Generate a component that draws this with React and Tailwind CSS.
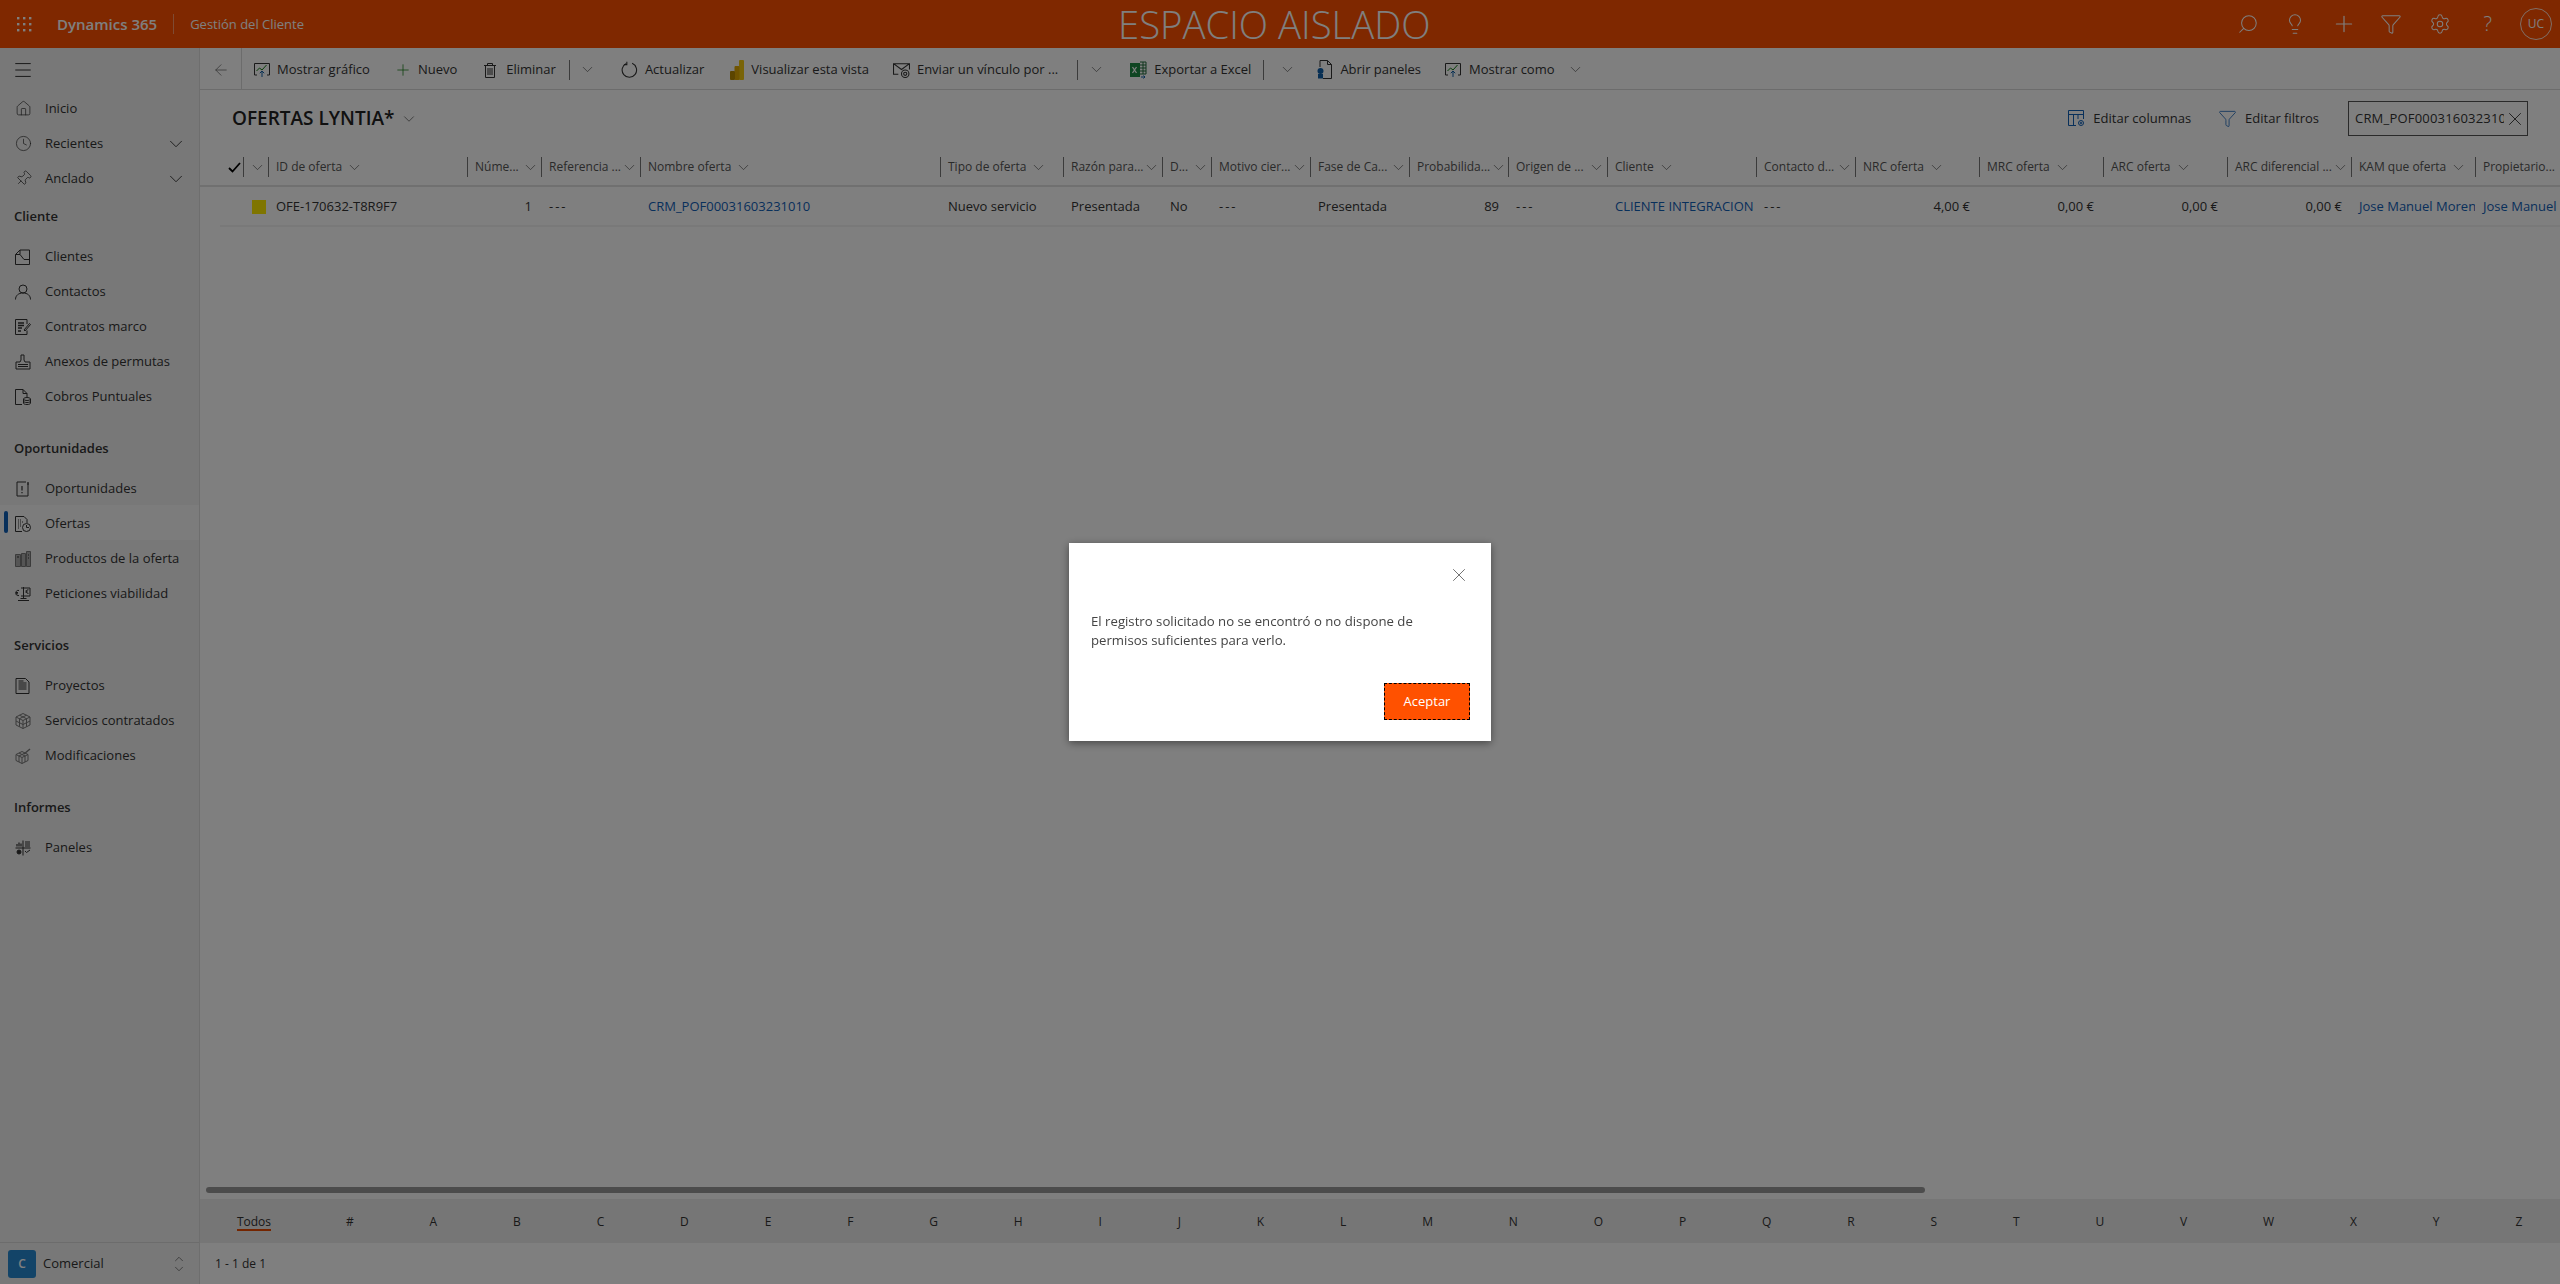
import React from 'react';
import { ChevronDown, ChevronUp, X, Menu, Search, Lightbulb, Plus, Filter, Settings, Home, Clock, Pin, ArrowLeft } from 'lucide-react';

const Ico = ({ size = 16, className = '', children }) => (
  <svg width={size} height={size} viewBox="0 0 16 16" fill="none" stroke="currentColor" strokeWidth="1" className={`shrink-0 ${className}`}>
    {children}
  </svg>
);

const ChartIcon = () => (
  <Ico className="text-[#333]">
    <path d="M3 13H.5V1.5h15V13H13" />
    <path d="M2.5 9l3-3 2.5 2 4.5-5" stroke="#107c10" />
    <path d="M8 15V9M5.8 11.2L8 9l2.2 2.2" stroke="#0f5ea8" />
  </Ico>
);

const TrashIcon = () => (
  <Ico className="text-[#333]">
    <path d="M2 3.5h12M5.5 3.5V1.5h5v2M3.5 3.5v12h9v-12M6 6v7M8 6v7M10 6v7" />
  </Ico>
);

const RefreshIcon = () => (
  <Ico size={17} className="text-[#333]">
    <path d="M10.5 2.2A6.8 6.8 0 1 1 5 2.3" />
    <path d="M5.5 .8v2.6H2.8" />
  </Ico>
);

const PowerBiIcon = () => (
  <svg width="14" height="20" viewBox="0 0 14 20" className="shrink-0">
    <rect x="9" y="0" width="5" height="20" rx="1" fill="#f2c811" />
    <rect x="4.500" y="6" width="5" height="14" rx="1" fill="#e0a800" />
    <rect x="0" y="11" width="5" height="9" rx="1" fill="#b88a00" />
  </svg>
);

const MailIcon = () => (
  <Ico size={17} className="text-[#333]">
    <path d="M5 12.500H.5v-10h15V8M.5 2.500L8 8l7.500-5.500" />
    <circle cx="11.500" cy="12" r="3.500" />
    <circle cx="11.500" cy="12" r="1.500" />
  </Ico>
);

const ExcelIcon = () => (
  <svg width="17" height="18" viewBox="0 0 17 18" className="shrink-0">
    <rect x="0" y="2" width="10" height="14" fill="#1e8a44" />
    <path d="M2.500 6l4 6M6.500 6l-4 6" stroke="#fff" strokeWidth="1.300" />
    <path d="M10 1h6v12h-6M10 4h6M10 7h6M10 10h6M13 1v12" fill="none" stroke="#1e6b3a" strokeWidth="1" />
    <path d="M11 16h4M13.500 14.500L15 16l-1.500 1.500" fill="none" stroke="#0f5ea8" strokeWidth="1" />
  </svg>
);

const PanelIcon = () => (
  <svg width="15" height="19" viewBox="0 0 15 19" fill="none" className="shrink-0">
    <path d="M3 7V.5h7.500l4 4v14H6" stroke="#333" />
    <path d="M10.500.5v4h4" stroke="#333" />
    <circle cx="3.500" cy="11" r="3" fill="#0f5ea8" />
    <rect x="1" y="14" width="5" height="4.500" fill="#0f5ea8" />
  </svg>
);

const ColumnsIcon = () => (
  <svg width="17" height="17" viewBox="0 0 17 17" fill="none" stroke="#1160b7" className="shrink-0">
    <path d="M8 15.500H.5V.5h15V9M.5 4.500h15M5.500 4.500v11M10 4.500V9" />
    <circle cx="13" cy="13" r="2.500" />
    <circle cx="13" cy="13" r=".8" />
  </svg>
);

const navIcons = {
  home: <Home size={17} strokeWidth={1} />,
  clock: <Clock size={17} strokeWidth={1} />,
  pin: <Pin size={17} strokeWidth={1} className="rotate-45" />,
  user: (
    <Ico><circle cx="8" cy="5" r="4" /><path d="M.5 15.500c0-4 3-6.500 7.500-6.500s7.500 2.500 7.500 6.500" /></Ico>
  ),
  clientes: (
    <Ico><path d="M.5 5.500V15.500h14V1H5zM.5 5.500h4.500l4 5h5.500" /><path d="M5 1v4.500" /></Ico>
  ),
  contratos: (
    <Ico><path d="M12 5V.5H.5v15H12v-4" /><path d="M3 4h6M3 6.500h6M3 9h4M3 12h3" strokeWidth="1.300" /><path d="M9 11l5.500-6.500 1 1L10 12z" /></Ico>
  ),
  anexos: (
    <Ico><path d="M6 1h3v5l1 2h5v7H1V8h4l1-2zM3 10.500h10M3 12.500h10" /></Ico>
  ),
  cobros: (
    <Ico><path d="M7 15.500H.5V.5H8l4 4V8M8 .5v4h4" /><ellipse cx="12" cy="10" rx="3.500" ry="1.500" /><path d="M8.500 10v4c0 1 1.500 1.500 3.500 1.500s3.500-.5 3.500-1.500v-4M8.500 12c0 1 1.500 1.500 3.500 1.500s3.500-.5 3.500-1.500" /></Ico>
  ),
  oportunidades: (
    <Ico><path d="M11 1H2v14h11V1.500M13 1v3" /><path d="M7 5v4.500M7 11v1.200" strokeWidth="1.200" /></Ico>
  ),
  ofertas: (
    <Ico><path d="M7 15.500H.5V.5H9l3 3V7" /><path d="M3 4h3M3 6h5M3 8h4M3 10h3M3 12h2" strokeDasharray="1 1" strokeWidth="1.200" /><circle cx="11.500" cy="11.500" r="4" /><path d="M11.500 9v2.500H14" /></Ico>
  ),
  productos: (
    <Ico className="text-[#777]"><path d="M.5 3.500h5v12h-5zM6.500 2.500h4v13h-4zM11.500.5h4v15h-4z" fill="#aaa" /><path d="M2 6h2M13 4h1M13 7h1" stroke="#333" /></Ico>
  ),
  peticiones: (
    <Ico><path d="M6 2h9v8H6M8.500 1v11M3 14.500h11M5.500 12.500h6" /><path d="M4 4.500C2 4 1 5 1 7s1 3 3 2.500M.5 6.500H3M.5 7.800H3M13.500 3.800c-1-.3-2 .2-2 1.800s1 2 2 1.800M10.500 5h2M10.500 6.200h2" /></Ico>
  ),
  proyectos: (
    <Ico><path d="M1 .5h9.500l3.500 3.500v11.500H1zM3.500 5h8M3.500 7h8M3.500 9h8M3.500 11h8M3.500 3h5" /></Ico>
  ),
  servicios: (
    <Ico className="text-[#777]"><path d="M8 .5l7 3.500v8l-7 3.500-7-3.500V4zM1 4l7 3.500L15 4M8 7.500v8M4.500 2.200l7 3.500v8M11.500 2.200l-7 3.500v8M1 8l7 3.500L15 8" /></Ico>
  ),
  modificaciones: (
    <Ico className="text-[#777]"><path d="M7 3.500l6 3v6l-6 3-6-3v-6zM1 6.500l6 3 6-3M7 9.500v6M4 5l6 3v6M10 5l-6 3v6" /><path d="M9 6l6-5" strokeWidth="1.400" /></Ico>
  ),
  paneles: (
    <Ico><path d="M.5 8h15M8 .5v15" /><path d="M2 6.500V4M4 6.500V2.500M6 6.500V3.500" strokeWidth="1.200" /><path d="M10 2h5M10 4h5M10 6h5" /><circle cx="4" cy="12" r="2" fill="currentColor" /><path d="M10 11l1.500 1.500L15 10" /></Ico>
  ),
};

const navGroups = [
  { title: 'Cliente', items: [['Clientes', 'clientes'], ['Contactos', 'user'], ['Contratos marco', 'contratos'], ['Anexos de permutas', 'anexos'], ['Cobros Puntuales', 'cobros']] },
  { title: 'Oportunidades', items: [['Oportunidades', 'oportunidades'], ['Ofertas', 'ofertas'], ['Productos de la oferta', 'productos'], ['Peticiones viabilidad', 'peticiones']] },
  { title: 'Servicios', items: [['Proyectos', 'proyectos'], ['Servicios contratados', 'servicios'], ['Modificaciones', 'modificaciones']] },
  { title: 'Informes', items: [['Paneles', 'paneles']] },
];

const NavItem = ({ label, icon, active, arrow }) => (
  <div className={`relative flex h-[35px] items-center pl-[15px] pr-[8px] pt-[2px] text-[#333] ${active ? 'bg-[#f8f8f8]' : ''}`}>
    {active && <span className="absolute left-[4px] top-[6px] h-[22px] w-[4px] rounded-sm bg-[#1160b7]" />}
    <span className="flex w-[30px] shrink-0 items-center">{navIcons[icon]}</span>
    <span className="flex-1 whitespace-nowrap">{label}</span>
    {arrow && <ChevronDown size={22} strokeWidth={1} className="mr-[4px]" />}
  </div>
);

const Sidebar = () => (
  <aside className="flex w-[200px] shrink-0 flex-col border-r border-[#dcdcdc] bg-[#f0f0f0]">
    <div className="flex h-[42px] items-center pl-[12px] pt-[2px] text-[#222]">
      <Menu size={22} strokeWidth={1} />
    </div>
    <NavItem label="Inicio" icon="home" />
    <NavItem label="Recientes" icon="clock" arrow />
    <NavItem label="Anclado" icon="pin" arrow />
    {navGroups.map((group, i) => (
      <div key={group.title} className={i > 0 ? 'mt-[14px]' : ''}>
        <div className="flex h-[43px] items-center pl-[14px] pt-[1px] font-semibold text-[#333]">{group.title}</div>
        {group.items.map(([label, icon]) => (
          <NavItem key={label} label={label} icon={icon} active={label === 'Ofertas'} />
        ))}
      </div>
    ))}
    <div className="flex-1" />
    <div className="flex h-[42px] items-center border-t border-[#d8d8d8] pl-[8px] text-[#333]">
      <span className="flex h-[28px] w-[28px] items-center justify-center rounded-[3px] bg-[#2688d0] text-[12px] font-semibold text-white">C</span>
      <span className="ml-[7px] flex-1">Comercial</span>
      <span className="mr-[13px] flex flex-col">
        <ChevronUp size={14} strokeWidth={1} className="-mb-[2px]" />
        <ChevronDown size={14} strokeWidth={1} className="-mt-[2px]" />
      </span>
    </div>
  </aside>
);

const Sep = ({ className = '' }) => <span className={`h-[20px] w-px bg-[#777] ${className}`} />;
const Chev = ({ className = '' }) => <ChevronDown size={17} strokeWidth={1} className={`shrink-0 text-[#555] ${className}`} />;

const Toolbar = () => (
  <div className="flex h-[42px] shrink-0 items-center border-b border-[#d8d8d8] pt-[2px] text-[#333]">
    <div className="-mt-[2px] flex h-[41px] w-[42px] items-center justify-center border-r border-[#d8d8d8] pt-[2px] text-[#666]">
      <ArrowLeft size={18} strokeWidth={1} />
    </div>
    <div className="ml-[12px]"><ChartIcon /></div>
    <span className="ml-[7px]">Mostrar gráfico</span>
    <Plus size={18} strokeWidth={1} className="ml-[24px] text-[#107c10]" />
    <span className="ml-[6px]">Nuevo</span>
    <div className="ml-[25px]"><TrashIcon /></div>
    <span className="ml-[8px]">Eliminar</span>
    <Sep className="ml-[13px]" />
    <Chev className="ml-[9px]" />
    <div className="ml-[25px]"><RefreshIcon /></div>
    <span className="ml-[7px]">Actualizar</span>
    <div className="ml-[26px]"><PowerBiIcon /></div>
    <span className="ml-[7px]">Visualizar esta vista</span>
    <div className="ml-[24px]"><MailIcon /></div>
    <span className="ml-[7px]">Enviar un vínculo por ...</span>
    <Sep className="ml-[19px]" />
    <Chev className="ml-[10px]" />
    <div className="ml-[25px]"><ExcelIcon /></div>
    <span className="ml-[7px]">Exportar a Excel</span>
    <Sep className="ml-[12px]" />
    <Chev className="ml-[15px]" />
    <div className="ml-[21px]"><PanelIcon /></div>
    <span className="ml-[8px]">Abrir paneles</span>
    <div className="ml-[24px]"><ChartIcon /></div>
    <span className="ml-[8px]">Mostrar como</span>
    <Chev className="ml-[12px]" />
  </div>
);

const gridCols = 'grid grid-cols-[24px_24px_199px_74px_99px_300px_123px_99px_49px_99px_99px_99px_99px_149px_99px_124px_124px_124px_124px_124px_124px]';

const columns = [
  { label: 'ID de oferta' },
  { label: 'Núme...', end: true },
  { label: 'Referencia ...', end: true },
  { label: 'Nombre oferta' },
  { label: 'Tipo de oferta' },
  { label: 'Razón para...', end: true },
  { label: 'D...', end: true },
  { label: 'Motivo cier...', end: true },
  { label: 'Fase de Ca...', end: true },
  { label: 'Probabilida...', end: true },
  { label: 'Origen de ...', end: true },
  { label: 'Cliente' },
  { label: 'Contacto d...', end: true },
  { label: 'NRC oferta' },
  { label: 'MRC oferta' },
  { label: 'ARC oferta' },
  { label: 'ARC diferencial ...', end: true },
  { label: 'KAM que oferta' },
  { label: 'Propietario...', end: true },
];

const cells = [
  { text: 'OFE-170632-T8R9F7' },
  { text: '1', right: true },
  { text: '---' },
  { text: 'CRM_POF00031603231010', link: true },
  { text: 'Nuevo servicio' },
  { text: 'Presentada' },
  { text: 'No' },
  { text: '---' },
  { text: 'Presentada' },
  { text: '89', right: true },
  { text: '---' },
  { text: 'CLIENTE INTEGRACION', link: true },
  { text: '---' },
  { text: '4,00 €', right: true },
  { text: '0,00 €', right: true },
  { text: '0,00 €', right: true },
  { text: '0,00 €', right: true },
  { text: 'Jose Manuel Moreno', link: true },
  { text: 'Jose Manuel Moreno', link: true },
];

const Grid = () => (
  <div className="overflow-hidden">
    <div className="flex h-[40px] items-center border-b-2 border-[#e0e0e0] pl-[20px] pt-[2px] text-[12px] text-[#555]">
      <div className={`${gridCols} items-center`}>
        <div className="flex h-[20px] items-center border-r border-[#777] text-black">
          <svg width="13" height="11" viewBox="0 0 13 11" fill="none" stroke="#000" strokeWidth="1.800" className="ml-[8px]"><path d="M1 6l3.500 3.500L12 1" /></svg>
        </div>
        <div className="flex h-[20px] items-center justify-end pr-[2px]"><Chev /></div>
        {columns.map((col) => (
          <div key={col.label} className="flex h-[20px] items-center border-l border-[#777] pl-[7px] pr-[1px]">
            <span className="whitespace-nowrap">{col.label}</span>
            <Chev className={col.end ? 'ml-auto mr-[1px]' : 'ml-[4px]'} />
          </div>
        ))}
      </div>
    </div>
    <div className="ml-[20px] h-[40px] border-b-2 border-[#f2f2f2]">
      <div className={`${gridCols} h-[38px] items-center pt-[2px] text-[#333]`}>
        <div />
        <div className="pl-[8px]"><span className="block h-[14px] w-[14px] bg-[#ffeb00]" /></div>
        {cells.map((c, i) => (
          <div key={i} className={`overflow-hidden whitespace-nowrap pl-[8px] ${c.right ? 'pr-[9px] text-right' : ''} ${c.link ? 'text-[#1160b7]' : ''} ${c.text === '---' ? 'tracking-[2px]' : ''}`}>
            {c.text}
          </div>
        ))}
      </div>
    </div>
  </div>
);

const letters = ['#', 'A', 'B', 'C', 'D', 'E', 'F', 'G', 'H', 'I', 'J', 'K', 'L', 'M', 'N', 'O', 'P', 'Q', 'R', 'S', 'T', 'U', 'V', 'W', 'X', 'Y', 'Z'];

const Footer = () => (
  <>
    <div className="ml-[6px] h-[6px] w-[1719px] shrink-0 rounded-full bg-[#999]" />
    <div className="mt-[6px] flex h-[44px] shrink-0 items-center bg-[#ececec] pt-[2px] text-[12px] text-[#333]">
      <div className="flex w-[108px] shrink-0 justify-center">
        <span className="border-b-2 border-[#e84b00] leading-[15px]">Todos</span>
      </div>
      {letters.map((l) => (
        <div key={l} className="flex-auto text-center">{l}</div>
      ))}
    </div>
    <div className="flex h-[41px] shrink-0 items-center pl-[15px] text-[12px] text-[#333]">1 - 1 de 1</div>
  </>
);

const Dialog = () => (
  <div className="fixed inset-0 flex items-center justify-center bg-black/50">
    <div className="relative h-[198px] w-[422px] bg-white p-[22px] text-[13.2px] text-[#444] shadow-[0_2px_8px_rgba(0,0,0,0.45)]">
      <X size={22} strokeWidth={1} className="absolute right-[21px] top-[21px] text-[#666]" />
      <p className="mt-[47px] leading-[19px]">
        El registro solicitado no se encontró o no dispone de<br />permisos suficientes para verlo.
      </p>
      <button className="absolute bottom-[21px] right-[21px] h-[37px] w-[86px] border border-dashed border-black bg-[#ff5100] pt-[1px] text-[13px] text-white">Aceptar</button>
    </div>
  </div>
);

export default function App() {
  return (
    <div className="relative flex h-[1284px] w-[2560px] flex-col overflow-hidden bg-white text-[13px]" style={{ fontFamily: '"Open Sans", "Liberation Sans", sans-serif' }}>
      <header className="relative flex h-[48px] shrink-0 items-center bg-[#ff5100] text-white">
        <svg width="16" height="16" viewBox="0 0 16 16" fill="#fff" className="ml-[16px]">
          {[1, 7, 13].flatMap((y) => [1, 7, 13].map((x) => <rect key={`${x}-${y}`} x={x} y={y} width="2.400" height="2.400" />))}
        </svg>
        <span className="ml-[25px] text-[15px] font-semibold">Dynamics 365</span>
        <span className="ml-[16px] h-[20px] w-px bg-white/40" />
        <span className="ml-[16px] pt-[1px] text-[13px]">Gestión del Cliente</span>
        <div className="absolute left-[1118px] top-0 flex h-[48px] items-center whitespace-nowrap text-[38.300px] font-light leading-none">ESPACIO AISLADO</div>
        <div className="ml-auto flex items-center">
          <Search size={22} strokeWidth={1.1} className="-scale-x-100" />
          <Lightbulb size={22} strokeWidth={1.1} className="ml-[25px]" />
          <Plus size={26} strokeWidth={1.1} className="ml-[25px]" />
          <Filter size={22} strokeWidth={1.1} className="ml-[23px]" />
          <Settings size={22} strokeWidth={1.1} className="ml-[27px]" />
          <span className="ml-[33px] text-[20px] font-light">?</span>
          <span className="ml-[28px] mr-[8px] flex h-[32px] w-[32px] items-center justify-center rounded-full border border-white/80 text-[12px]">UC</span>
        </div>
      </header>
      <div className="flex min-h-0 flex-1">
        <Sidebar />
        <main className="flex min-w-0 flex-1 flex-col">
          <Toolbar />
          <div className="flex h-[57px] shrink-0 items-center pl-[32px] pr-[32px] text-[#333]">
            <span className="text-[19px] font-semibold text-[#222]">OFERTAS LYNTIA*</span>
            <ChevronDown size={18} strokeWidth={1} className="ml-[6px] text-[#555]" />
            <div className="ml-auto flex items-center">
              <ColumnsIcon />
              <span className="ml-[8px]">Editar columnas</span>
              <Filter size={19} strokeWidth={1} className="ml-[27px] text-[#1160b7]" />
              <span className="ml-[8px]">Editar filtros</span>
              <div className="ml-[29px] flex h-[35px] w-[180px] items-center border border-[#555] pl-[6px] pr-[1px]">
                <span className="flex-1 overflow-hidden whitespace-nowrap tracking-[0.2px]">CRM_POF00031603231010</span>
                <X size={22} strokeWidth={1} className="shrink-0" />
              </div>
            </div>
          </div>
          <Grid />
          <div className="flex-1" />
          <Footer />
        </main>
      </div>
      <Dialog />
    </div>
  );
}
